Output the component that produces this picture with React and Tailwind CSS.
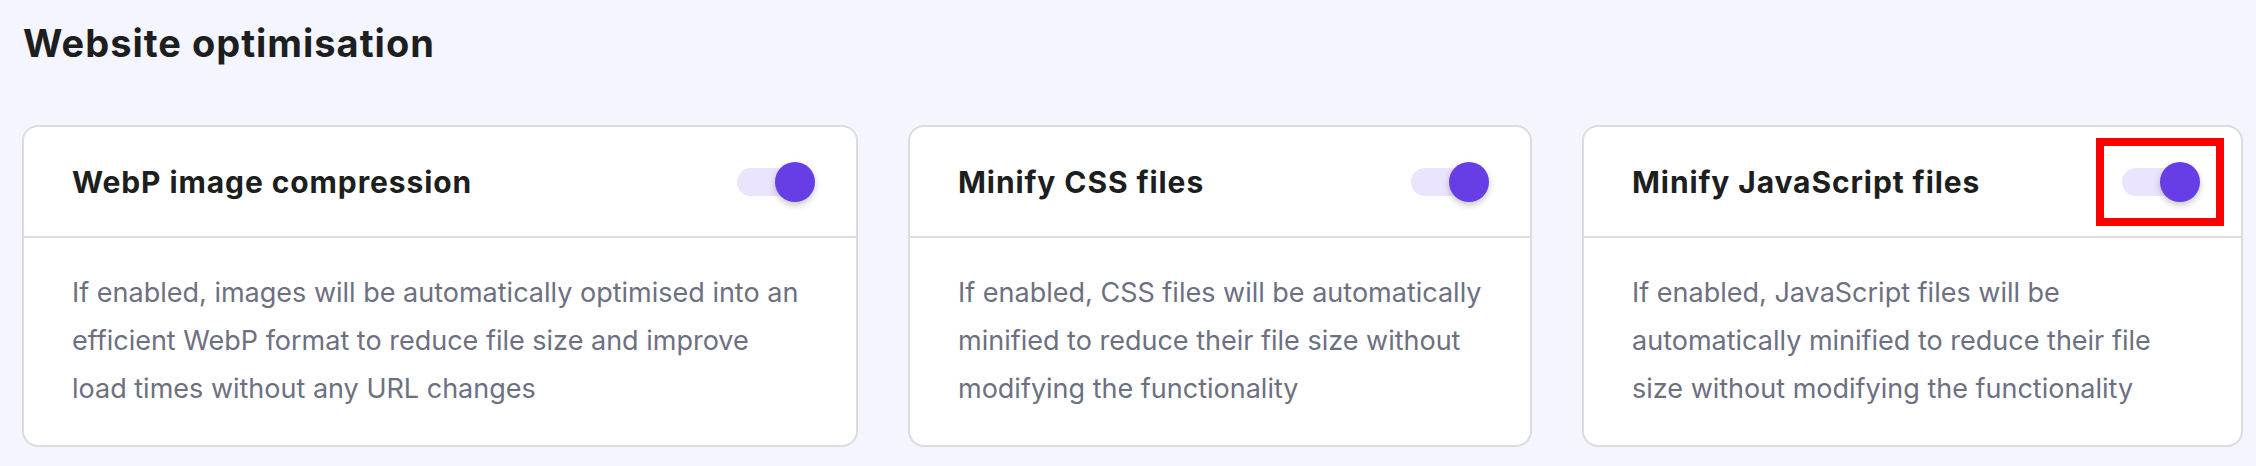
const settings = [
  {
    id: "webp",
    title: "WebP image compression",
    description:
      "If enabled, images will be automatically optimised into an efficient WebP format to reduce file size and improve load times without any URL changes",
  },
  {
    id: "css",
    title: "Minify CSS files",
    description:
      "If enabled, CSS files will be automatically minified to reduce their file size without modifying the functionality",
  },
  {
    id: "js",
    title: "Minify JavaScript files",
    description:
      "If enabled, JavaScript files will be automatically minified to reduce their file size without modifying the functionality",
    highlighted: true,
  },
];

function Toggle({ highlighted }) {
  return (
    <div className="relative w-[72px] h-[28px] rounded-full bg-[#ebe4ff] shrink-0">
      <div className="absolute -right-[6px] -top-[6px] w-10 h-10 rounded-full bg-[#673de6] shadow-[0_3px_6px_rgba(29,30,32,0.25)]" />
      {highlighted && (
        <div className="absolute -left-[26px] -right-[30px] -top-[30px] -bottom-[30px] border-[8px] border-[#f00]" />
      )}
    </div>
  );
}

function SettingCard({ title, description, highlighted }) {
  return (
    <div className="bg-white border-2 border-[#dadce0] rounded-2xl">
      <div className="h-[111px] flex items-center justify-between pl-[48px] pr-[47px] border-b-2 border-[#dadce0]">
        <h3 className="text-[30px] leading-8 font-bold tracking-[0.9px] text-[#1d1e20]">{title}</h3>
        <Toggle highlighted={highlighted} />
      </div>
      <p className="px-[48px] pt-[31px] pb-[32px] text-[27px] leading-[48px] text-[#6d7081]">
        {description}
      </p>
    </div>
  );
}

export default function App() {
  return (
    <div
      className="min-h-screen bg-[#f4f5ff] pl-[22px] pt-[20px]"
      style={{ fontFamily: "Inter, 'Noto Sans', sans-serif" }}
    >
      <h1 className="pl-[1px] text-[38px] leading-[46px] font-bold tracking-[1px] text-[#1d1e20]">
        Website optimisation
      </h1>
      <div className="mt-[59px] grid grid-cols-[836px_624px_661px] gap-[50px]">
        {settings.map((s) => (
          <SettingCard key={s.id} {...s} />
        ))}
      </div>
    </div>
  );
}
